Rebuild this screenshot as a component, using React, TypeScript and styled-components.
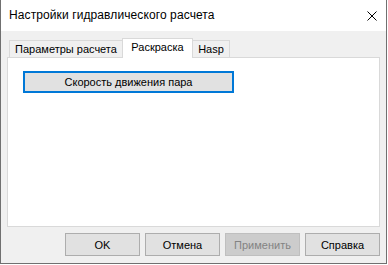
import React from "react";
import styled, { createGlobalStyle } from "styled-components";

const Global = createGlobalStyle`
  html, body { margin: 0; padding: 0; background: #ffffff; }
  body { font-family: "Liberation Sans", Arial, sans-serif; }
  * { box-sizing: border-box; }
`;

const Window = styled.div`
  width: 387px;
  height: 264px;
  border: 1px solid #707070;
  border-top: none;
  background: #f0f0f0;
  display: flex;
  flex-direction: column;
`;

const TitleBar = styled.div`
  height: 31px;
  background: #ffffff;
  display: flex;
  align-items: center;
  justify-content: space-between;
  padding: 0 9px 1px 8px;
`;

const Title = styled.span`
  font-size: 12px;
  color: #000;
  letter-spacing: 0.1px;
`;

const CloseButton = styled.span`
  width: 10px;
  height: 10px;
  display: flex;
  margin-top: 1px;
`;

const Content = styled.div`
  flex: 1;
  display: flex;
  flex-direction: column;
  padding: 7px 6px 0 6px;
`;

const TabStrip = styled.div`
  height: 20px;
  display: flex;
  align-items: flex-end;
  padding-left: 2px;
  position: relative;
  z-index: 1;
`;

const Tab = styled.div<{ $w: number; $active?: boolean }>`
  width: ${(p) => p.$w}px;
  height: ${(p) => (p.$active ? 20 : 17)}px;
  margin-bottom: ${(p) => (p.$active ? 0 : 1)}px;
  background: ${(p) => (p.$active ? "#ffffff" : "#f0f0f0")};
  border: 1px solid #d9d9d9;
  border-bottom: none;
  ${(p) => (p.$active ? "" : "")}
  font-size: 11px;
  color: #000;
  display: flex;
  align-items: ${(p) => (p.$active ? "flex-start" : "center")};
  padding-top: ${(p) => (p.$active ? 2 : 0)}px;
  justify-content: center;
  white-space: nowrap;
  & + & { margin-left: -1px; }
`;

const Panel = styled.div`
  margin-top: -1px;
  height: 170px;
  background: #ffffff;
  border: 1px solid #d9d9d9;
  padding: 13px 0 0 15px;
`;

const ColorButton = styled.div`
  width: 211px;
  height: 22px;
  background: #e1e1e1;
  border: 2px solid #0078d7;
  font-size: 11px;
  color: #000;
  display: flex;
  align-items: center;
  justify-content: center;
`;

const Footer = styled.div`
  display: flex;
  justify-content: flex-end;
  gap: 5px;
  margin-top: 6px;
`;

const Button = styled.div<{ $disabled?: boolean }>`
  width: 75px;
  height: 23px;
  background: ${(p) => (p.$disabled ? "#cccccc" : "#e1e1e1")};
  border: 1px solid ${(p) => (p.$disabled ? "#bfbfbf" : "#adadad")};
  color: ${(p) => (p.$disabled ? "#838383" : "#000")};
  font-size: 11px;
  display: flex;
  align-items: center;
  justify-content: center;
`;

export default function App() {
  return (
    <>
      <Global />
      <Window>
        <TitleBar>
          <Title>Настройки гидравлического расчета</Title>
          <CloseButton>
            <svg width="10" height="10" viewBox="0 0 10 10">
              <path d="M0.5 0.5 L9.5 9.5 M9.5 0.5 L0.5 9.5" stroke="#000" strokeWidth="1" fill="none" />
            </svg>
          </CloseButton>
        </TitleBar>
        <Content>
          <TabStrip>
            <Tab $w={114}>Параметры расчета</Tab>
            <Tab $w={71} $active>Раскраска</Tab>
            <Tab $w={38}>Hasp</Tab>
          </TabStrip>
          <Panel>
            <ColorButton>Скорость движения пара</ColorButton>
          </Panel>
          <Footer>
            <Button>OK</Button>
            <Button>Отмена</Button>
            <Button $disabled>Применить</Button>
            <Button>Справка</Button>
          </Footer>
        </Content>
      </Window>
    </>
  );
}
